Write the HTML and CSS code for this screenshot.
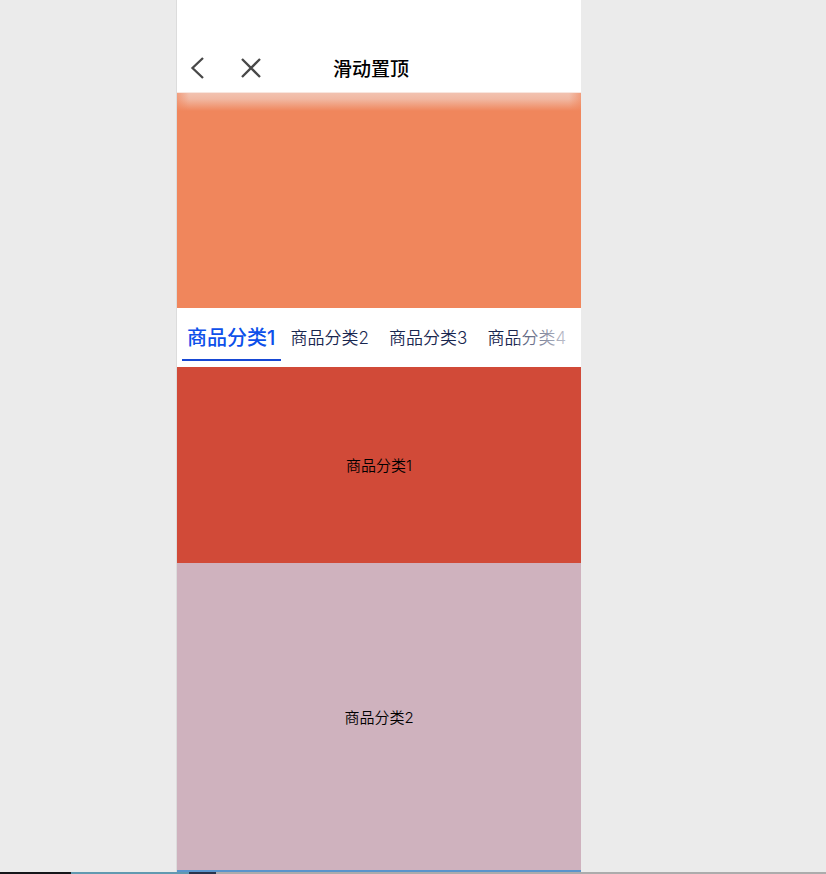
FILE: index.html
```html
<!DOCTYPE html>
<html lang="zh-CN">
<head>
<meta charset="utf-8">
<meta name="viewport" content="width=device-width, initial-scale=1">
<title>滑动置顶</title>
<link rel="stylesheet" href="styles.css">
</head>
<body>
<div class="stage">
  <main class="phone">
    <header class="navbar">
      <button class="nav-button" type="button" aria-label="返回">
        <svg width="22" height="24" viewBox="0 0 22 24"><path d="M17 2 6.500 12 17 22"/></svg>
      </button>
      <button class="nav-button nav-close" type="button" aria-label="关闭">
        <svg width="22" height="24" viewBox="0 0 22 24"><path d="M2 3l18 18M20 3 2 21"/></svg>
      </button>
      <h1 class="title">滑动置顶</h1>
    </header>
    <div class="banner"></div>
    <nav class="tabs">
      <a class="tab tab-active" href="#category-1">商品分类1</a>
      <a class="tab" href="#category-2">商品分类2</a>
      <a class="tab" href="#category-3">商品分类3</a>
      <a class="tab" href="#category-4">商品分类4</a>
    </nav>
    <section class="panel panel-red" id="category-1">商品分类1</section>
    <section class="panel panel-pink" id="category-2">商品分类2</section>
    <section class="panel-blue" id="category-3"></section>
  </main>
</div>
<footer class="dock">
  <div class="dock-dark"></div>
  <div class="dock-teal"></div>
  <div class="dock-navy"></div>
  <div class="dock-gray"></div>
</footer>
</body>
</html>
```
FILE: styles.css
```css
* {
  box-sizing: border-box;
}

body {
  margin: 0;
  min-height: 100vh;
  display: flex;
  flex-direction: column;
  background: #ebebeb;
  color: #000;
  font-family: Inter, "Noto Sans CJK SC", sans-serif;
}

.stage {
  flex: 1;
  display: grid;
  grid-template-columns: 177fr 404fr 245fr;
}

.phone {
  grid-column: 2;
  min-width: 0;
  display: flex;
  flex-direction: column;
  background: #fff;
  box-shadow: -1px 0 #dcdcdc;
}

.navbar {
  display: flex;
  align-items: center;
  height: 93px;
  padding: 44px 0 0 9px;
  border-bottom: 1px solid #f8e6df;
}

.nav-button {
  display: flex;
  padding: 0;
  border: 0;
  background: none;
}

.nav-button svg {
  fill: none;
  stroke: #484848;
  stroke-width: 2.3;
}

.nav-close {
  margin-left: 32px;
}

.title {
  margin: 0 0 0 71px;
  padding-top: 4px;
  font-size: 19px;
  line-height: 28px;
  font-weight: 500;
  white-space: nowrap;
}

.banner {
  position: relative;
  height: 215px;
  background: #f0865c;
}

.banner::before {
  content: "";
  position: absolute;
  inset: 0 0 auto;
  height: 18px;
  background:
    linear-gradient(to right, rgba(240, 134, 92, 0.6), rgba(240, 134, 92, 0) 12px),
    linear-gradient(to left, rgba(240, 134, 92, 0.6), rgba(240, 134, 92, 0) 12px),
    linear-gradient(#f2c2b0, #f1b8a2 6px, #f0865c 18px);
}

.tabs {
  position: relative;
  display: flex;
  height: 59px;
  padding: 0 5px 6px;
}

.tabs::after {
  content: "";
  position: absolute;
  top: 0;
  right: 0;
  bottom: 0;
  width: 64px;
  background: linear-gradient(to right, rgba(255, 255, 255, 0.2), rgba(255, 255, 255, 0.8) 90%);
  pointer-events: none;
}

.tab {
  flex: 1;
  display: flex;
  align-items: center;
  justify-content: center;
  padding-top: 8px;
  border-bottom: 2px solid transparent;
  color: #18264f;
  font-size: 17px;
  line-height: 24px;
  font-weight: 350;
  white-space: nowrap;
  text-decoration: none;
}

.tab-active {
  border-color: #1648d4;
  color: #0d50ea;
  font-size: 20px;
  font-weight: 500;
}

.panel {
  display: flex;
  align-items: center;
  justify-content: center;
  padding-top: 2px;
  font-size: 15px;
  line-height: 20px;
  font-weight: 350;
}

.panel-red {
  height: 196px;
  background: #d14a38;
}

.panel-pink {
  flex: 1;
  min-height: 200px;
  background: #cfb2be;
}

.panel-blue {
  height: 2px;
  background: #5a94cc;
}

.dock {
  display: grid;
  grid-template-columns: 71fr 118fr 27fr 610fr;
  height: 2px;
}

.dock-dark {
  background: #15171a;
}

.dock-teal {
  background: #6299b0;
}

.dock-navy {
  background: #29354d;
}

.dock-gray {
  background: #acacac;
}
```
